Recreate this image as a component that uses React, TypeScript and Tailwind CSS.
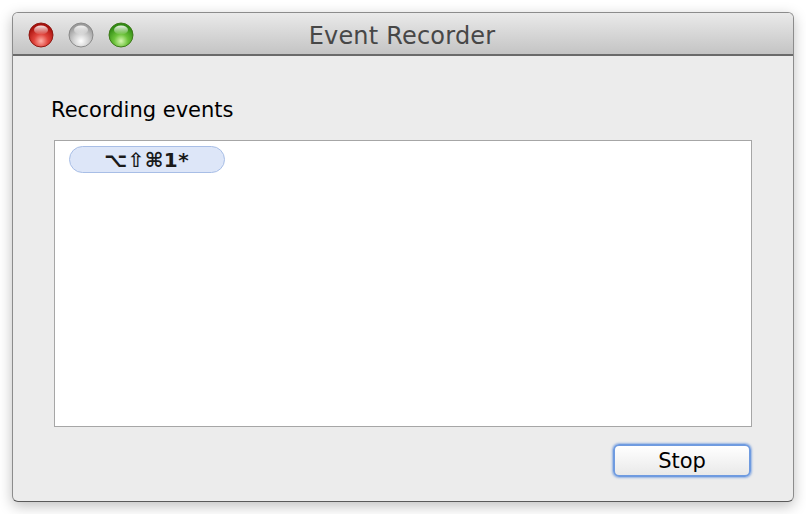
import React from 'react';

// ---------------------------------------------------------------------------
// TrafficLight — glossy window button drawn as svg
// ---------------------------------------------------------------------------

type Light = { id: string; base: string; dark: string; light: string; rim: string };

const lights: Light[] = [
  { id: 'close', base: '#e0443c', dark: '#a8100c', light: '#ffb0a8', rim: '#8e1a14' },
  { id: 'min', base: '#d4d4d4', dark: '#9a9a9a', light: '#ffffff', rim: '#8a8a8a' },
  { id: 'zoom', base: '#6cc23a', dark: '#2f8a12', light: '#d6f7b0', rim: '#3f7a1c' },
];

function TrafficLight({ l }: { l: Light }) {
  return (
    <svg width="26" height="26" viewBox="0 0 26 26">
      <defs>
        <radialGradient id={`g-${l.id}`} cx="50%" cy="75%" r="65%">
          <stop offset="0%" stopColor={l.light} />
          <stop offset="45%" stopColor={l.base} />
          <stop offset="100%" stopColor={l.dark} />
        </radialGradient>
        <linearGradient id={`h-${l.id}`} x1="0" y1="0" x2="0" y2="1">
          <stop offset="0%" stopColor="#ffffff" stopOpacity="0.9" />
          <stop offset="100%" stopColor="#ffffff" stopOpacity="0.05" />
        </linearGradient>
      </defs>
      <circle cx="13" cy="13" r="12" fill={`url(#g-${l.id})`} stroke={l.rim} strokeWidth="1" />
      <ellipse cx="13" cy="8" rx="7" ry="4.5" fill={`url(#h-${l.id})`} />
    </svg>
  );
}

// ---------------------------------------------------------------------------
// App
// ---------------------------------------------------------------------------

export default function App() {
  return (
    <div className="min-h-screen w-[806px] bg-white pl-[12px] pt-[12px] font-['DejaVu_Sans',sans-serif]">
      <div className="flex h-[490px] w-[782px] flex-col overflow-hidden rounded-[6px] border border-[#8c8c8c] border-b-[#5a5a5a] bg-[#ececec] shadow-[0_4px_14px_rgba(0,0,0,0.25)]">
        {/* title bar */}
        <div className="relative flex h-[43px] shrink-0 items-center border-b-2 border-[#6a6a6a] bg-gradient-to-b from-[#eaeaea] to-[#c4c4c4] pl-[15px] pt-[2px]">
          <div className="flex gap-[14px]">
            {lights.map((l) => (
              <TrafficLight key={l.id} l={l} />
            ))}
          </div>
          <div className="absolute inset-0 flex items-center justify-center pt-[4px] pr-[2px] text-[24px] tracking-[0.2px] text-[#474747]">
            Event Recorder
          </div>
        </div>

        {/* body */}
        <div className="flex flex-1 flex-col px-[41px] pt-[40px]">
          <div className="-ml-[3px] text-[21px] leading-[28px] text-black">Recording events</div>

          <div className="mt-[16px] h-[287px] border border-[#a6a6a6] bg-white px-[14px] py-[5px]">
            <div className="flex h-[27px] w-[156px] items-center rounded-full border border-[#a8bee6] bg-[#dde6f8] pl-[34px] text-[20px] font-bold tracking-[0.5px] text-[#1a1a1a]">
              ⌥⇧⌘1*
            </div>
          </div>

          <div className="mt-[17px] flex justify-end pr-[1px]">
            <button className="h-[33px] w-[138px] rounded-[6px] border-2 border-[#6f9be0] bg-gradient-to-b from-[#ffffff] to-[#e9e9e9] pt-[2px] text-[21px] leading-none text-black shadow-[0_0_2px_1px_rgba(90,140,220,0.6)]">
              Stop
            </button>
          </div>
        </div>
      </div>
    </div>
  );
}
